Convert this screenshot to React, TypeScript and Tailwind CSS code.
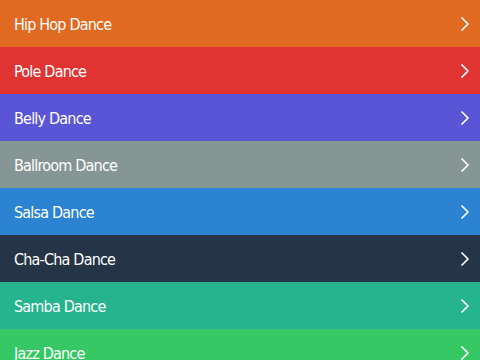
import { ChevronRight } from "lucide-react";

const dances = [
  { name: "Hip Hop Dance", color: "bg-[#e06a21]" },
  { name: "Pole Dance", color: "bg-[#e03432]" },
  { name: "Belly Dance", color: "bg-[#5a55d6]" },
  { name: "Ballroom Dance", color: "bg-[#859695]" },
  { name: "Salsa Dance", color: "bg-[#2c83d1]" },
  { name: "Cha-Cha Dance", color: "bg-[#253547]" },
  { name: "Samba Dance", color: "bg-[#26b48e]" },
  { name: "Jazz Dance", color: "bg-[#35c864]" },
];

export default function App() {
  return (
    <div className="w-[480px] h-[360px] overflow-hidden font-['DejaVu_Sans_Condensed','DejaVu_Sans',sans-serif]">
      {dances.map(d => (
        <div key={d.name} className={`${d.color} h-[47px] flex items-center justify-between pl-[14px] pr-[3px] text-white`}>
          <span className="text-[16px] tracking-[-0.8px] pt-[2px]">{d.name}</span>
          <ChevronRight className="w-[24px] h-[24px]" strokeWidth={1.75} />
        </div>
      ))}
    </div>
  );
}
